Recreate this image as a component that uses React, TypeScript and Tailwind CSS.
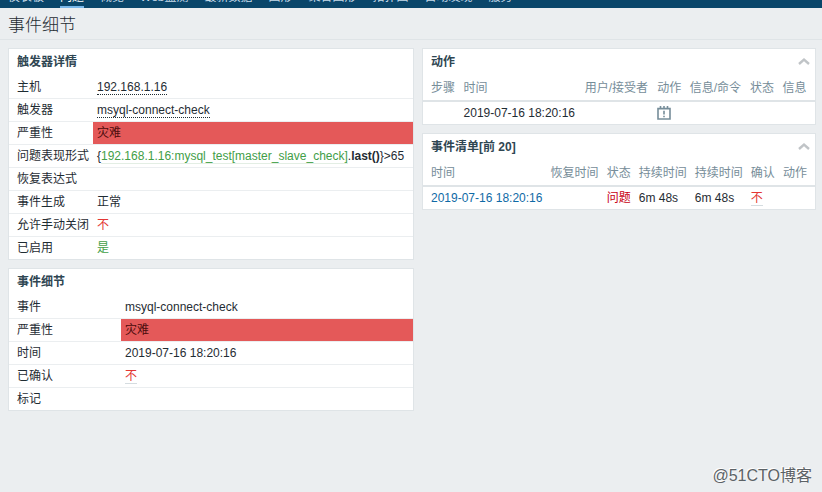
import type { ReactNode } from 'react'

const navItems = ['仪表板', '问题', '概览', 'Web监测', '最新数据', '图形', '聚合图形', '拓扑图', '自动发现', '服务']

type Detail = { label: string; value?: ReactNode; severity?: boolean }

const triggerDetails: Detail[] = [
  {
    label: '主机',
    value: <a href="#host" className="border-b border-dotted border-[#1f2c33]">192.168.1.16</a>,
  },
  {
    label: '触发器',
    value: <a href="#trigger" className="border-b border-dotted border-[#1f2c33]">msyql-connect-check</a>,
  },
  { label: '严重性', value: '灾难', severity: true },
  {
    label: '问题表现形式',
    value: (
      <>
        {'{'}
        <a href="#item" className="border-b border-[#e3eee4] text-[#429e47]">
          192.168.1.16:mysql_test[master_slave_check]
        </a>
        .<b>last()</b>
        {'}>65'}
      </>
    ),
  },
  { label: '恢复表达式' },
  { label: '事件生成', value: '正常' },
  { label: '允许手动关闭', value: <span className="text-[#e33734]">不</span> },
  { label: '已启用', value: <span className="text-[#429e47]">是</span> },
]

const eventDetails: Detail[] = [
  { label: '事件', value: 'msyql-connect-check' },
  { label: '严重性', value: '灾难', severity: true },
  { label: '时间', value: '2019-07-16 18:20:16' },
  {
    label: '已确认',
    value: <a href="#ack" className="border-b border-[#d5dce0] text-[#e33734]">不</a>,
  },
  { label: '标记' },
]

const actionColumns = ['步骤', '时间', '用户/接受者', '动作', '信息/命令', '状态', '信息']
const eventColumns = ['时间', '恢复时间', '状态', '持续时间', '持续时间', '确认', '动作']

function Panel({ title, collapsible, children }: { title: string; collapsible?: boolean; children: ReactNode }) {
  return (
    <section className="border border-[#dfe4e7] bg-white">
      <div className="flex h-[26px] items-center justify-between pl-2 pr-1">
        <h2 className="font-bold text-[#2f4652]">{title}</h2>
        {collapsible && (
          <button type="button" aria-label="收起" className="flex cursor-pointer items-center px-px">
            <svg width="12" height="8" viewBox="0 0 12 8" fill="none" stroke="#c0c4c7" strokeWidth="2.4">
              <path d="M1 6 6 1.6l5 4.4" />
            </svg>
          </button>
        )}
      </div>
      {children}
    </section>
  )
}

function DetailTable({ rows, labelClass }: { rows: Detail[]; labelClass: string }) {
  return (
    <table className="w-full table-fixed border-separate border-spacing-0">
      <tbody>
        {rows.map((row) => (
          <tr key={row.label} className="group">
            <th
              scope="row"
              className={`${labelClass} h-[23px] whitespace-nowrap border-t border-[#ebeef0] pl-2 text-left font-normal group-first:border-t-white`}
            >
              {row.label}
            </th>
            <td
              className={`whitespace-nowrap border-t border-[#ebeef0] bg-clip-padding pl-1 group-first:border-t-white ${
                row.severity ? 'bg-[#e45959] text-[#4b0c0c]' : ''
              }`}
            >
              {row.value}
            </td>
          </tr>
        ))}
      </tbody>
    </table>
  )
}

function ListTable({ columns, cells }: { columns: string[]; cells: ReactNode[] }) {
  return (
    <table className="w-full border-separate border-spacing-0">
      <thead>
        <tr className="text-left text-[#768d99]">
          {columns.map((column, i) => (
            <th
              key={i}
              className="h-[27px] whitespace-nowrap border-b-2 border-[#dfe4e7] px-1 font-normal first:pl-2 last:pr-2"
            >
              {column}
            </th>
          ))}
        </tr>
      </thead>
      <tbody>
        <tr>
          {cells.map((cell, i) => (
            <td key={i} className="h-[22px] whitespace-nowrap px-1 first:pl-2 last:pr-2">
              {cell}
            </td>
          ))}
        </tr>
      </tbody>
    </table>
  )
}

function MessageIcon() {
  return (
    <svg width="14" height="14" viewBox="0 0 14 14" fill="none" stroke="#768d99" strokeWidth="1.6">
      <path d="M1 2.6h12V13H1z" />
      <path d="M3.5 0v3M7 0v3M10.5 0v3" />
      <path d="M7 4.8v3.8M7 9.7v1.5" />
    </svg>
  )
}

export default function App() {
  return (
    <div className="relative min-h-screen bg-[#ebeef0] font-['Liberation_Sans','Noto_Sans_CJK_SC',sans-serif] text-xs leading-[14px] text-[#1f2c33]">
      {/* Sub navigation, scrolled almost out of view */}
      <nav className="flex h-2 items-end gap-4 overflow-hidden bg-[#0a466a] px-2 text-[#c8dcea]">
        {navItems.map((item) => (
          <a
            key={item}
            href="#nav"
            className={`whitespace-nowrap border-b-2 pb-0.5 ${
              item === '问题' ? 'border-[#7ab8ea] text-white' : 'border-transparent'
            }`}
          >
            {item}
          </a>
        ))}
      </nav>

      <header className="border-b border-[#dfe4e7] px-2 pb-0.5 pt-1.5">
        <h1 className="text-[17px] font-light leading-[23px]">事件细节</h1>
      </header>

      <main className="grid grid-cols-[406fr_394fr] items-start gap-2 py-2 pl-2 pr-[6px]">
        <div className="flex min-w-0 flex-col gap-2">
          <Panel title="触发器详情">
            <DetailTable rows={triggerDetails} labelClass="w-[84px]" />
          </Panel>
          <Panel title="事件细节">
            <DetailTable rows={eventDetails} labelClass="w-28" />
          </Panel>
        </div>

        <div className="flex min-w-0 flex-col gap-2">
          <Panel title="动作" collapsible>
            <ListTable
              columns={actionColumns}
              cells={['', '2019-07-16 18:20:16', '', <MessageIcon />, '', '', '']}
            />
          </Panel>
          <Panel title="事件清单[前 20]" collapsible>
            <ListTable
              columns={eventColumns}
              cells={[
                <a href="#event" className="text-[#0f6aa6]">2019-07-16 18:20:16</a>,
                '',
                <span className="text-[#c80010]">问题</span>,
                '6m 48s',
                '6m 48s',
                <a href="#ack" className="border-b border-[#d5dce0] text-[#e33734]">不</a>,
                '',
              ]}
            />
          </Panel>
        </div>
      </main>

      <p className="absolute bottom-2 right-2.5 text-base leading-4 text-[#5c6266] [text-shadow:-1px_-1px_0_#fff]">
        @51CTO博客
      </p>
    </div>
  )
}
